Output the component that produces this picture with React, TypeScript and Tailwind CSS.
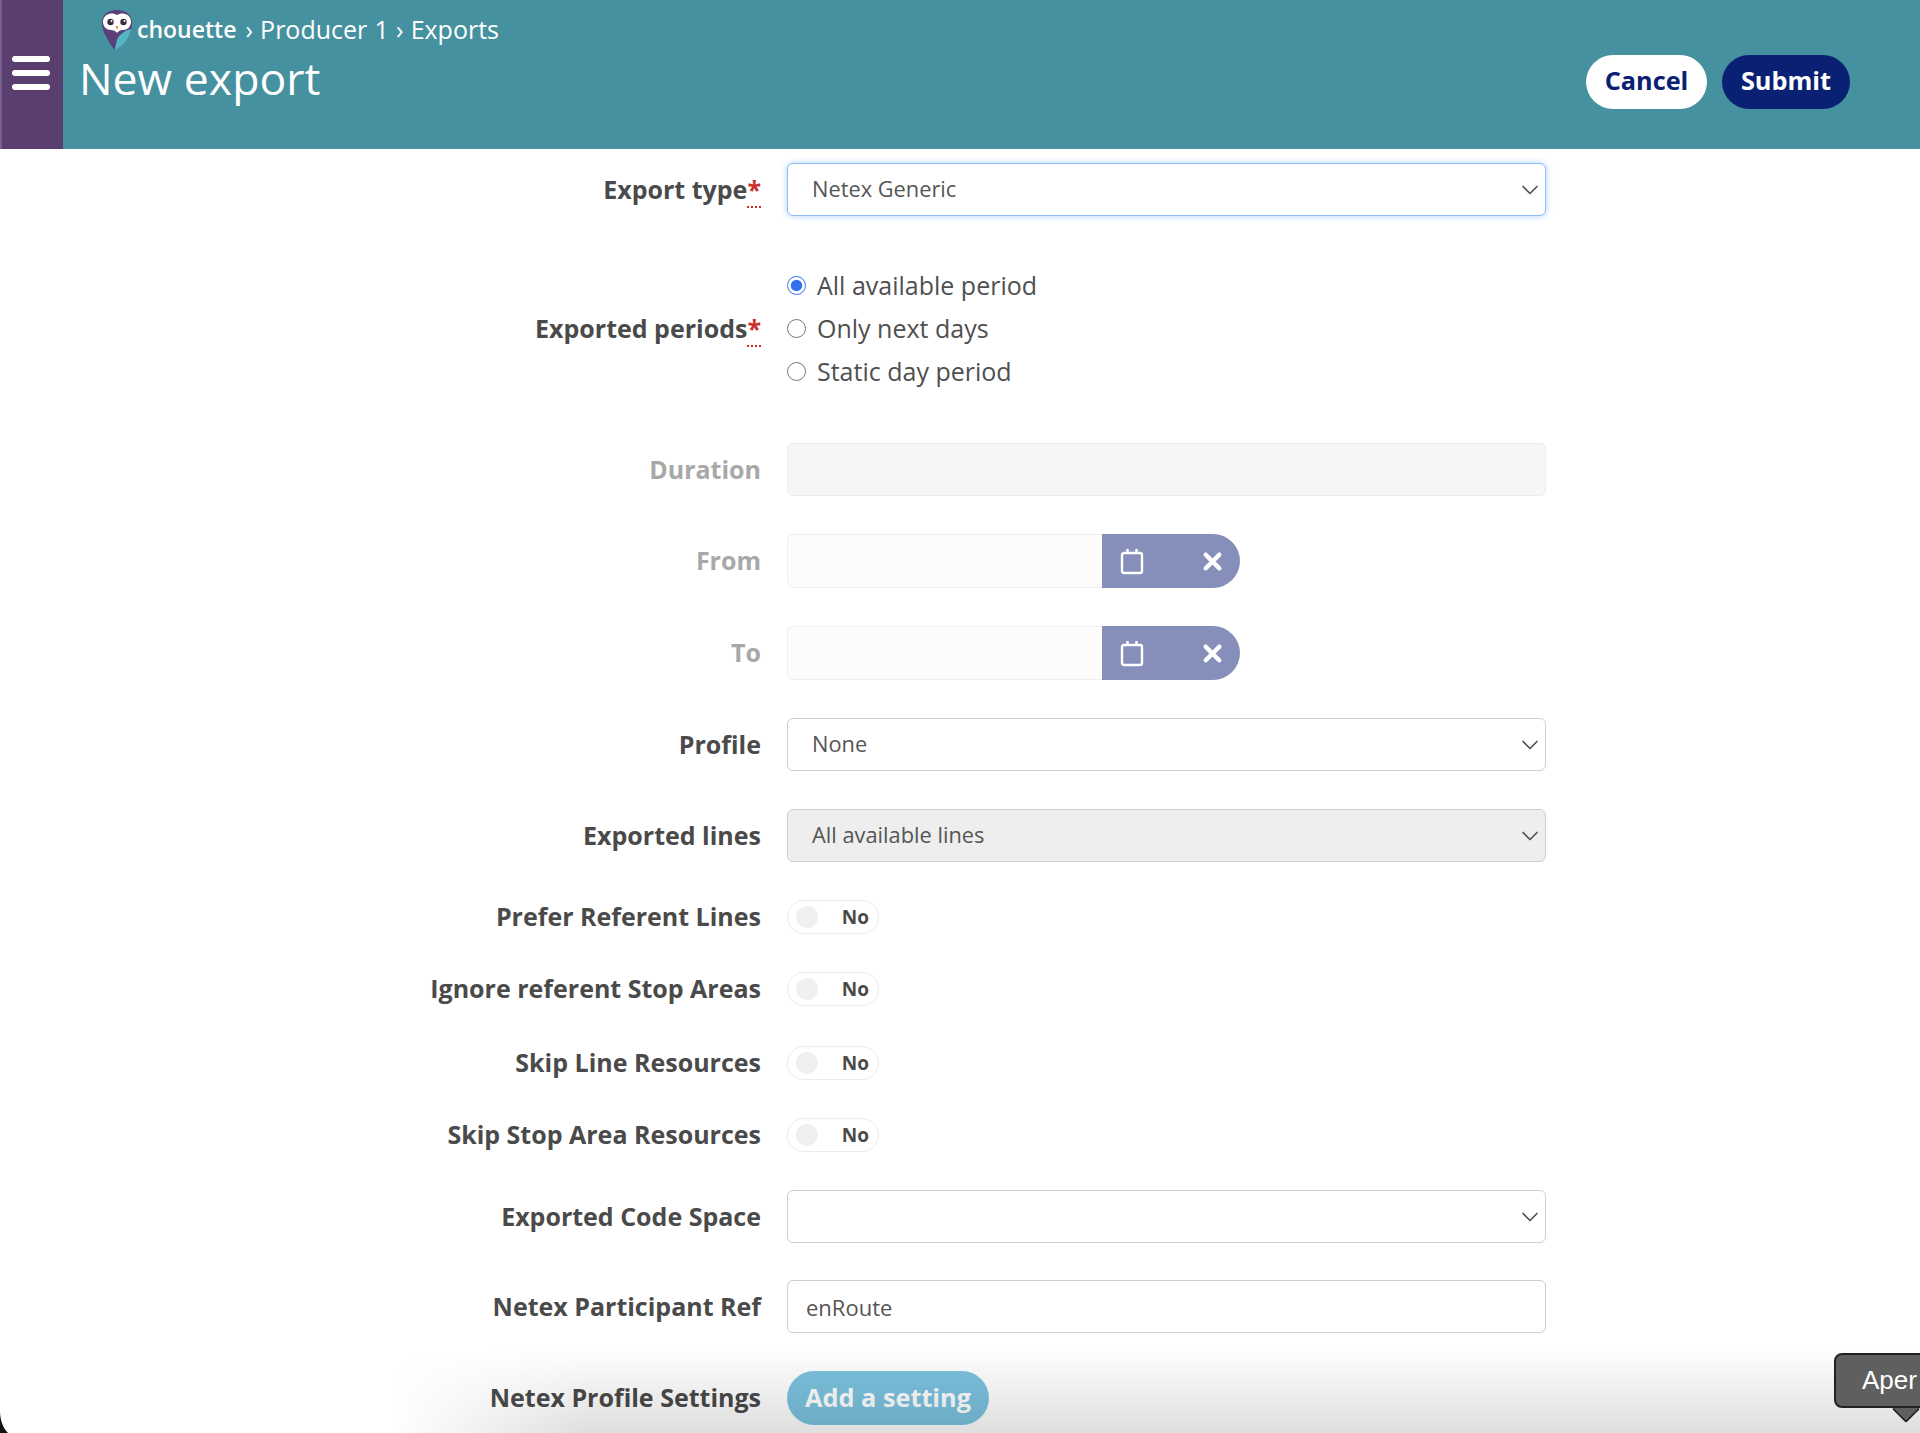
import { ChevronDown, X } from "lucide-react";

function Owl() {
  return (
    <svg viewBox="0 0 32 42" className="h-[42px] w-[32px] shrink-0">
      <path d="M16 1C7 1 1 6 1 14c0 6 3 12 6 17 2 4 5 8 7 10 5-2 11-7 14-14 2-5 3-9 3-13C31 6 25 1 16 1z" fill="#5a3f78" />
      <path d="M14 41c5-2 11-7 14-14 1-3 2-5 2-7-5 1-12 5-14 11-1 4-2 7-2 10z" fill="#55b4c4" />
      <path d="M16 6c-2-1-5-2-8-1-4 1-6 4-6 8 0 5 4 8 8 8 2 0 5 1 6 3 1-2 4-3 6-3 4 0 8-3 8-8 0-4-2-7-6-8-3-1-6 0-8 1z" fill="#fff" />
      <circle cx="9.5" cy="13" r="3.2" fill="#3a2a3e" />
      <circle cx="22.5" cy="13" r="3.2" fill="#3a2a3e" />
      <circle cx="10.5" cy="12" r="1" fill="#fff" />
      <circle cx="23.5" cy="12" r="1" fill="#fff" />
      <path d="M14.5 17h3l-1.5 4z" fill="#e8923c" />
    </svg>
  );
}

function Label({ children, required, disabled }: { children: string; required?: boolean; disabled?: boolean }) {
  return (
    <label className={`w-[761px] shrink-0 pb-[2px] text-right text-[25px] font-bold leading-[32px] ${disabled ? "text-[#a8a8a8]" : "text-[#4a4a4a]"}`}>
      {children}
      {required && (
        <abbr className="text-[#c9302c] no-underline border-b-2 border-dotted border-[#c9302c]">*</abbr>
      )}
    </label>
  );
}

function SelectField({ value, focused, grey }: { value: string; focused?: boolean; grey?: boolean }) {
  const border = focused
    ? "border-[#8fbcf3] shadow-[0_0_6px_rgba(80,150,240,0.45)]"
    : "border-[#cfcfcf]";
  return (
    <div className={`flex h-[53px] w-[759px] items-center justify-between rounded-[6px] border pl-[24px] pr-[1px] text-[21.8px] text-[#555] ${border} ${grey ? "bg-[#eeeeee]" : "bg-white"}`}>
      <span>{value}</span>
      <ChevronDown className="h-[28px] w-[28px] text-[#555]" strokeWidth={1.5} />
    </div>
  );
}

function DateField() {
  return (
    <div className="flex h-[54px] w-[453px]">
      <div className="h-full w-[315px] rounded-l-[6px] border border-r-0 border-[#efefef] bg-[#fcfcfc]" />
      <div className="flex h-full flex-1 items-center rounded-r-[27px] bg-[#858fba] pl-[18px] text-white">
        <svg viewBox="0 0 24 27" className="h-[29px] w-[24px]" fill="none" stroke="currentColor" strokeWidth="2.4">
          <rect x="2" y="5" width="20" height="20" rx="2" />
          <path d="M7.5 1v5M16.5 1v5" />
        </svg>
        <X className="ml-[55px] h-[27px] w-[27px]" strokeWidth={4} />
      </div>
    </div>
  );
}

function Toggle() {
  return (
    <div className="flex h-[34px] w-[92px] items-center justify-between rounded-full border border-[#ececec] bg-white pl-[8px] pr-[9px]">
      <span className="h-[22px] w-[22px] rounded-full bg-[#f0f0f0]" />
      <span className="text-[19px] font-bold text-[#4a4a4a]">No</span>
    </div>
  );
}

function Radio({ label, checked }: { label: string; checked?: boolean }) {
  return (
    <label className="flex h-[43px] items-center gap-[11px] text-[25px] text-[#4f4f4f]">
      <input type="radio" name="period" defaultChecked={checked} className="m-0 h-[19px] w-[19px] accent-[#3370f0]" />
      {label}
    </label>
  );
}

const toggles = [
  { label: "Prefer Referent Lines", className: "mt-[38px]" },
  { label: "Ignore referent Stop Areas", className: "mt-[38px]" },
  { label: "Skip Line Resources", className: "mt-[40px]" },
  { label: "Skip Stop Area Resources", className: "mt-[38px]" },
];

export default function App() {
  return (
    <div className="relative h-[1433px] w-[1920px] overflow-hidden bg-white font-['Open_Sans',sans-serif]">
      {/* Header */}
      <header className="flex h-[149px] bg-[#45919f] text-white">
        <div className="flex w-[63px] shrink-0 items-start border-l-2 border-[#775f8d] bg-[#5a3f6e] pl-[10px] pt-[56px]">
          <div className="flex w-[38px] flex-col gap-[8px]">
            <span className="h-[6px] rounded-full bg-white" />
            <span className="h-[6px] rounded-full bg-white" />
            <span className="h-[6px] rounded-full bg-white" />
          </div>
        </div>
        <div className="flex-1 pl-[16px]">
          <div className="flex h-[59px] items-center pl-[22px] text-[25px]">
            <Owl />
            <span className="ml-[4px] text-[23px] font-semibold">chouette</span>
            <span className="ml-[9px] [word-spacing:0.7px]">› Producer 1 › Exports</span>
          </div>
          <h1 className="-mt-[5px] text-[44.6px] font-normal leading-[48px]">New export</h1>
        </div>
        <div className="flex items-start gap-[15px] pr-[70px] pt-[55px]">
          <button className="h-[54px] w-[121px] rounded-full bg-white pb-[2px] text-[25.3px] font-bold text-[#0a2173]">Cancel</button>
          <button className="h-[54px] w-[128px] rounded-full bg-[#0a2173] pb-[2px] text-[25.3px] font-bold text-white">Submit</button>
        </div>
      </header>

      {/* Form */}
      <form className="flex flex-col pt-[14px]">
        <div className="flex items-center gap-[26px]">
          <Label required>Export type</Label>
          <SelectField value="Netex Generic" focused />
        </div>

        <div className="mt-[48px] flex items-center gap-[26px]">
          <Label required>Exported periods</Label>
          <div className="flex flex-col">
            <Radio label="All available period" checked />
            <Radio label="Only next days" />
            <Radio label="Static day period" />
          </div>
        </div>

        <div className="mt-[50px] flex items-center gap-[26px]">
          <Label disabled>Duration</Label>
          <div className="h-[53px] w-[759px] rounded-[6px] border border-[#ececec] bg-[#f6f6f6]" />
        </div>

        <div className="mt-[38px] flex items-center gap-[26px]">
          <Label disabled>From</Label>
          <DateField />
        </div>

        <div className="mt-[38px] flex items-center gap-[26px]">
          <Label disabled>To</Label>
          <DateField />
        </div>

        <div className="mt-[38px] flex items-center gap-[26px]">
          <Label>Profile</Label>
          <SelectField value="None" />
        </div>

        <div className="mt-[38px] flex items-center gap-[26px]">
          <Label>Exported lines</Label>
          <SelectField value="All available lines" grey />
        </div>

        {toggles.map((t) => (
          <div key={t.label} className={`flex items-center gap-[26px] ${t.className}`}>
            <Label>{t.label}</Label>
            <Toggle />
          </div>
        ))}

        <div className="mt-[38px] flex items-center gap-[26px]">
          <Label>Exported Code Space</Label>
          <SelectField value="" />
        </div>

        <div className="mt-[37px] flex items-center gap-[26px]">
          <Label>Netex Participant Ref</Label>
          <input
            defaultValue="enRoute"
            className="h-[53px] w-[759px] rounded-[6px] border border-[#cfcfcf] bg-white pl-[18px] text-[22px] text-[#555] outline-none"
          />
        </div>

        <div className="mt-[38px] flex items-center gap-[26px]">
          <Label>Netex Profile Settings</Label>
          <button type="button" className="h-[54px] w-[202px] rounded-full bg-[#7cc3e0] text-[25.3px] font-bold text-white">
            Add a setting
          </button>
        </div>
      </form>

      {/* Window shadow along the bottom edge, fading out to the left */}
      <div className="pointer-events-none absolute bottom-0 left-[390px] right-0 h-[85px] bg-gradient-to-b from-transparent to-[rgba(0,0,0,0.13)] [mask-image:linear-gradient(to_right,transparent,black_200px)]" />

      {/* Window corner */}
      <svg viewBox="0 0 8 22" className="absolute bottom-0 left-0 h-[22px] w-[8px]">
        <path d="M0 0C0 9 3 17 8 22H0z" fill="#111" />
      </svg>

      {/* Dock tooltip, cut off by the right edge */}
      <div className="absolute left-[1896px] top-[1399px] h-[20px] w-[20px] rotate-45 rounded-[2px] border-b-2 border-r-2 border-[#222] bg-[#5f5f5f]" />
      <div className="absolute left-[1834px] top-[1353px] h-[55px] w-[120px] rounded-[8px] border-2 border-[#222] bg-[#5f5f5f] pl-[26px] font-['Liberation_Sans',sans-serif] text-[26px] leading-[50px] text-white">
        Aper
      </div>
      <div className="absolute left-[1897px] top-[1400px] h-[6px] w-[18px] bg-[#5f5f5f]" />
    </div>
  );
}
